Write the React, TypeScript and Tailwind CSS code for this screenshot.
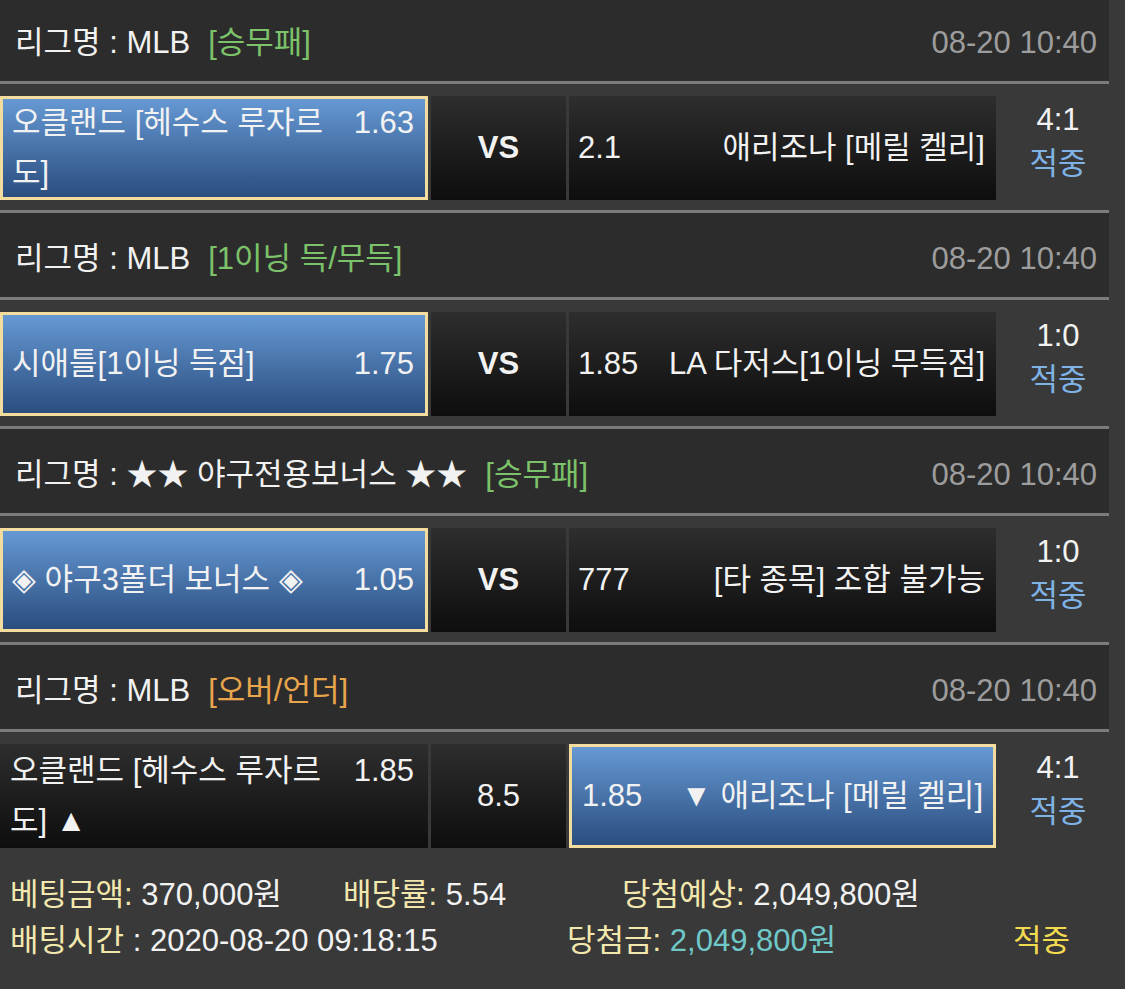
import React from 'react';

type Side = {
  name: React.ReactNode;
  odds: string;
  picked?: boolean;
  twoLines?: boolean;
};

interface Match {
  id: string;
  league: string;
  tag: string;
  tagColor: string;
  time: string;
  home: Side;
  middle: string;
  middleBold?: boolean;
  away: Side;
  score: string;
}

const matches: Match[] = [
  {
    id: 'm1',
    league: 'MLB',
    tag: '[승무패]',
    tagColor: 'text-[#7cc26a]',
    time: '08-20 10:40',
    home: { name: <>오클랜드 [헤수스 루자르<br />도]</>, odds: '1.63', picked: true, twoLines: true },
    middle: 'VS',
    middleBold: true,
    away: { name: '애리조나 [메릴 켈리]', odds: '2.1' },
    score: '4:1',
  },
  {
    id: 'm2',
    league: 'MLB',
    tag: '[1이닝 득/무득]',
    tagColor: 'text-[#7cc26a]',
    time: '08-20 10:40',
    home: { name: '시애틀[1이닝 득점]', odds: '1.75', picked: true },
    middle: 'VS',
    middleBold: true,
    away: { name: 'LA 다저스[1이닝 무득점]', odds: '1.85' },
    score: '1:0',
  },
  {
    id: 'm3',
    league: '★★ 야구전용보너스 ★★',
    tag: '[승무패]',
    tagColor: 'text-[#7cc26a]',
    time: '08-20 10:40',
    home: { name: '◈ 야구3폴더 보너스 ◈', odds: '1.05', picked: true },
    middle: 'VS',
    middleBold: true,
    away: { name: '[타 종목] 조합 불가능', odds: '777' },
    score: '1:0',
  },
  {
    id: 'm4',
    league: 'MLB',
    tag: '[오버/언더]',
    tagColor: 'text-[#e9a54c]',
    time: '08-20 10:40',
    home: { name: <>오클랜드 [헤수스 루자르<br />도] ▲</>, odds: '1.85', twoLines: true },
    middle: '8.5',
    away: { name: '▼ 애리조나 [메릴 켈리]', odds: '1.85', picked: true },
    score: '4:1',
  },
];

const cellDark = 'bg-linear-to-b from-[#2e2e2e] to-[#0e0e0e]';
const cellBlue = 'bg-linear-to-b from-[#6699d4] to-[#2b4e7f] border-[3px] border-[#f2dd9e]';

function HomeCell({ side }: { side: Side }) {
  return (
    <div
      className={`w-[428px] h-full flex items-center justify-between ${
        side.picked ? `${cellBlue} pl-[9px] pr-[11px]` : `${cellDark} pl-[10px] pr-[14px]`
      }`}
    >
      {side.twoLines ? (
        <>
          <div className="leading-[50px]">{side.name}</div>
          <div className="leading-[50px] h-[100px]">{side.odds}</div>
        </>
      ) : (
        <>
          <span>{side.name}</span>
          <span>{side.odds}</span>
        </>
      )}
    </div>
  );
}

function AwayCell({ side }: { side: Side }) {
  return (
    <div
      className={`w-[427px] h-full flex items-center justify-between ${
        side.picked ? `${cellBlue} pl-[10px] pr-[10px]` : `${cellDark} pl-[9px] pr-[11px]`
      }`}
    >
      <span>{side.odds}</span>
      <span>{side.name}</span>
    </div>
  );
}

function MatchBlock({ match, last }: { match: Match; last?: boolean }) {
  return (
    <div>
      <div className="h-[3px] bg-[#7b7b7b]" />
      <div className="h-[84px] bg-[#2c2c2c] flex items-center justify-between pt-[8px] pl-[15px] pr-[12px]">
        <div>
          <span>리그명 : {match.league}</span>
          <span className={`ml-[18px] ${match.tagColor}`}>{match.tag}</span>
        </div>
        <span className="text-[#9d9d9d]">{match.time}</span>
      </div>
      <div className="h-[3px] bg-[#7b7b7b]" />
      <div className="h-[104px] mt-[12px] flex gap-[3px]">
        <HomeCell side={match.home} />
        <div
          className={`w-[135px] h-full flex items-center justify-center ${cellDark} ${
            match.middleBold ? 'font-bold text-[31px]' : ''
          }`}
        >
          {match.middle}
        </div>
        <AwayCell side={match.away} />
        <div className="flex-1 pl-[8px] text-center leading-[44px] pt-[2px]">
          <div>{match.score}</div>
          <div className="text-[#7fb2e5]">적중</div>
        </div>
      </div>
      {!last && <div className="h-[10px]" />}
    </div>
  );
}

export default function App() {
  return (
    <div className="min-h-screen w-full overflow-hidden bg-[#393939] text-[#f2f2f2] text-[31px] font-['Liberation_Sans','Noto_Sans_CJK_KR',sans-serif]">
      <div className="w-[1109px] -mt-[6px]">
        {matches.map((m, i) => (
          <MatchBlock key={m.id} match={m} last={i === matches.length - 1} />
        ))}
      </div>
      <div className="pt-[24px] pl-[10px] leading-[46px]">
        <div className="flex">
          <div className="w-[333px]">
            <span className="text-[#f2e8ae]">베팅금액:</span> 370,000원
          </div>
          <div className="w-[279px]">
            <span className="text-[#f2e8ae]">배당률:</span> 5.54
          </div>
          <div>
            <span className="text-[#f2e8ae]">당첨예상:</span> 2,049,800원
          </div>
        </div>
        <div className="flex">
          <div className="w-[557px]">
            <span className="text-[#f2e8ae]">배팅시간</span> : 2020-08-20 09:18:15
          </div>
          <div className="w-[446px]">
            <span className="text-[#f2e8ae]">당첨금:</span>{' '}
            <span className="text-[#70c8c8]">2,049,800원</span>
          </div>
          <div className="text-[#f3db4f]">적중</div>
        </div>
      </div>
    </div>
  );
}
